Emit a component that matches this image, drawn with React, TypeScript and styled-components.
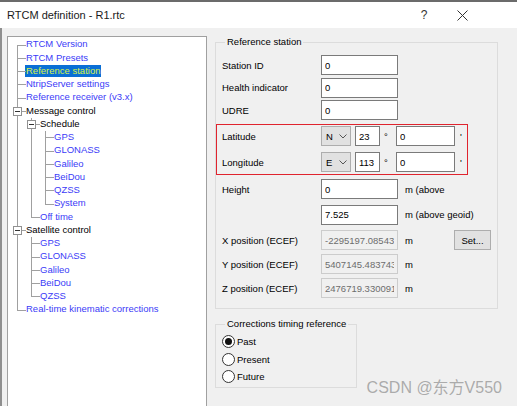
import React from 'react';
import styled, { createGlobalStyle } from 'styled-components';

const GlobalStyle = createGlobalStyle`
  html, body {
    margin: 0;
    padding: 0;
    background: #f0f0f0;
  }
  body {
    font-family: "Liberation Sans", Arial, sans-serif;
  }
`;

const Window = styled.div`
  position: relative;
  width: 517px;
  height: 406px;
  overflow: hidden;
  display: flex;
  flex-direction: column;
  box-sizing: border-box;
  background: #f0f0f0;
  border-top: 2px solid #6b6b6b;
`;

const TitleBar = styled.div`
  height: 26px;
  flex-shrink: 0;
  display: flex;
  align-items: center;
  padding-right: 36px;
  background: #ffffff;
`;

const Title = styled.div`
  flex: 1;
  padding-left: 7px;
  font-size: 11px;
  color: #1a1a1a;
`;

const CaptionButton = styled.div`
  width: 38px;
  height: 100%;
  display: flex;
  align-items: center;
  justify-content: center;
  font-size: 12px;
  color: #333;
`;

const Body = styled.div`
  flex: 1;
  display: flex;
  padding: 8px 0 0 5px;
  border-left: 2px solid #8f8f8f;
  min-height: 0;
`;

const TreePanel = styled.div`
  width: 200px;
  flex-shrink: 0;
  box-sizing: border-box;
  background: #ffffff;
  border: 1px solid #a0a0a0;
  border-bottom: none;
  padding: 1px 0 0 4px;
`;

const TreeRow = styled.div`
  display: flex;
  height: 13.25px;
`;

const Guide = styled.span<{ $on: boolean }>`
  position: relative;
  width: 14px;
  flex-shrink: 0;
  &::before {
    content: '';
    display: ${p => (p.$on ? 'block' : 'none')};
    position: absolute;
    left: 5px;
    top: 0;
    bottom: 0;
    width: 1px;
    background: #a0a0a0;
  }
`;

const Connector = styled.span<{ $first: boolean; $last: boolean }>`
  position: relative;
  width: 14px;
  flex-shrink: 0;
  &::before {
    content: '';
    position: absolute;
    left: 5px;
    top: ${p => (p.$first ? '50%' : '0')};
    bottom: ${p => (p.$last ? '50%' : '0')};
    width: 1px;
    background: #a0a0a0;
  }
  &::after {
    content: '';
    position: absolute;
    left: 5px;
    right: 0;
    top: 50%;
    height: 1px;
    background: #a0a0a0;
  }
`;

const Expander = styled.span`
  position: absolute;
  z-index: 1;
  left: 1px;
  top: calc(50% - 4px);
  width: 9px;
  height: 9px;
  box-sizing: border-box;
  display: flex;
  align-items: center;
  justify-content: center;
  background: #ffffff;
  border: 1px solid #919191;
  &::after {
    content: '';
    width: 5px;
    height: 1px;
    background: #333;
  }
`;

const TreeLabel = styled.span<{ $parent: boolean; $selected: boolean }>`
  align-self: center;
  margin-left: -1px;
  padding: 0 1px;
  font-size: 9.5px;
  line-height: 12.5px;
  white-space: nowrap;
  color: ${p => (p.$selected ? '#d4f24a' : p.$parent ? '#000000' : '#3b3bf7')};
  background: ${p => (p.$selected ? '#0a6fd6' : 'transparent')};
`;

const RightColumn = styled.div`
  width: 283px;
  margin-left: 8px;
  display: flex;
  flex-direction: column;
`;

const Group = styled.fieldset<{ $w?: number; $mt?: number }>`
  margin: ${p => p.$mt ?? 0}px 0 0 0;
  width: ${p => (p.$w ? `${p.$w}px` : 'auto')};
  min-width: 0;
  box-sizing: border-box;
  border: 1px solid #dcdcdc;
  padding: 7px 6px 10px 6px;
`;

const Legend = styled.legend`
  margin-left: 3px;
  padding: 0 2px;
  font-size: 9.5px;
  line-height: 12px;
  color: #000;
`;

const FieldRow = styled.div<{ $mt?: number }>`
  display: flex;
  align-items: center;
  height: 20px;
  margin-top: ${p => p.$mt ?? 0}px;
`;

const Label = styled.span`
  width: 99px;
  flex-shrink: 0;
  font-size: 9.5px;
  color: #000;
`;

const TextBox = styled.input<{ $w: number; $ml?: number }>`
  width: ${p => p.$w}px;
  height: 20px;
  margin: 0 0 0 ${p => p.$ml ?? 0}px;
  box-sizing: border-box;
  padding: 0 3px;
  border: 1px solid #7a7a7a;
  background: #ffffff;
  font-family: "Liberation Sans", Arial, sans-serif;
  font-size: 9.5px;
  color: #000;
  outline: none;
  &:disabled {
    background: #f0f0f0;
    border-color: #cccccc;
    color: #6d6d6d;
  }
`;

const Combo = styled.div`
  width: 30px;
  height: 20px;
  box-sizing: border-box;
  display: flex;
  align-items: center;
  justify-content: space-between;
  padding: 0 3px 0 4px;
  background: #e1e1e1;
  border: 1px solid #adadad;
  font-size: 9.5px;
  color: #000;
`;

const Mark = styled.span<{ $w: number; $ml: number }>`
  width: ${p => p.$w}px;
  margin-left: ${p => p.$ml}px;
  flex-shrink: 0;
  font-size: 9.5px;
  color: #000;
`;

const Unit = styled.span`
  margin-left: 7px;
  font-size: 9.5px;
  white-space: nowrap;
  color: #000;
`;

const Highlight = styled.div`
  margin: 4px 0 0 -6px;
  width: 252px;
  box-sizing: border-box;
  border: 1px solid #e0242e;
  padding: 1px 0 2px 5px;
`;

const PushButton = styled.button`
  margin-left: auto;
  width: 37px;
  height: 20px;
  box-sizing: border-box;
  padding: 0;
  background: #e1e1e1;
  border: 1px solid #adadad;
  font-family: "Liberation Sans", Arial, sans-serif;
  font-size: 9.5px;
  color: #000;
`;

const RadioRow = styled.label`
  display: flex;
  align-items: center;
  height: 17.5px;
  font-size: 9.5px;
  color: #000;
`;

const RadioCircle = styled.span<{ $checked: boolean }>`
  width: 13px;
  height: 13px;
  box-sizing: border-box;
  margin-right: 2px;
  border-radius: 50%;
  border: 1px solid #333;
  background: #fff;
  display: flex;
  align-items: center;
  justify-content: center;
  &::after {
    content: '';
    display: ${p => (p.$checked ? 'block' : 'none')};
    width: 7px;
    height: 7px;
    border-radius: 50%;
    background: #111;
  }
`;

const Watermark = styled.div`
  position: absolute;
  right: 15px;
  bottom: 9px;
  font-family: "Liberation Sans", "Noto Sans CJK SC", sans-serif;
  font-size: 16px;
  line-height: 18px;
  color: rgba(140, 140, 140, 0.7);
  pointer-events: none;
`;

type TreeNode = { label: string; selected?: boolean; children?: TreeNode[] };
type FlatRow = { node: TreeNode; depth: number; guides: boolean[]; first: boolean; last: boolean };

const leaf = (label: string): TreeNode => ({ label });

const tree: TreeNode[] = [
  leaf('RTCM Version'),
  leaf('RTCM Presets'),
  { label: 'Reference station', selected: true },
  leaf('NtripServer settings'),
  leaf('Reference receiver (v3.x)'),
  {
    label: 'Message control',
    children: [
      { label: 'Schedule', children: ['GPS', 'GLONASS', 'Galileo', 'BeiDou', 'QZSS', 'System'].map(l => leaf(l)) },
      leaf('Off time'),
    ],
  },
  { label: 'Satellite control', children: ['GPS', 'GLONASS', 'Galileo', 'BeiDou', 'QZSS'].map(l => leaf(l)) },
  leaf('Real-time kinematic corrections'),
];

function flatten(nodes: TreeNode[], depth: number, guides: boolean[], out: FlatRow[]) {
  nodes.forEach((node, i) => {
    const last = i === nodes.length - 1;
    out.push({ node, depth, guides, first: depth === 0 && i === 0, last });
    if (node.children) flatten(node.children, depth + 1, [...guides, !last], out);
  });
  return out;
}

const rows = flatten(tree, 0, [], []);

const Chevron = () => (
  <svg width="8" height="5" viewBox="0 0 8 5">
    <polyline points="0.5,0.5 4,4 7.5,0.5" fill="none" stroke="#555" strokeWidth="1" />
  </svg>
);

const CloseIcon = () => (
  <svg width="11" height="11" viewBox="0 0 11 11">
    <path d="M0.5 0.5 L10.5 10.5 M10.5 0.5 L0.5 10.5" stroke="#333" strokeWidth="1" />
  </svg>
);

const Radio = ({ label, checked }: { label: string; checked?: boolean }) => (
  <RadioRow>
    <RadioCircle $checked={!!checked} />
    {label}
  </RadioRow>
);

const App = () => (
  <Window>
    <GlobalStyle />
    <TitleBar>
      <Title>RTCM definition - R1.rtc</Title>
      <CaptionButton>?</CaptionButton>
      <CaptionButton>
        <CloseIcon />
      </CaptionButton>
    </TitleBar>
    <Body>
      <TreePanel>
        {rows.map((r, i) => (
          <TreeRow key={i}>
            {r.guides.map((g, j) => (
              <Guide key={j} $on={g} />
            ))}
            <Connector $first={r.first} $last={r.last}>
              {r.node.children && <Expander />}
            </Connector>
            <TreeLabel $parent={!!r.node.children} $selected={!!r.node.selected}>
              {r.node.label}
            </TreeLabel>
          </TreeRow>
        ))}
      </TreePanel>
      <RightColumn>
        <Group>
          <Legend>Reference station</Legend>
          <FieldRow>
            <Label>Station ID</Label>
            <TextBox $w={77} defaultValue="0" />
          </FieldRow>
          <FieldRow $mt={2.5}>
            <Label>Health indicator</Label>
            <TextBox $w={77} defaultValue="0" />
          </FieldRow>
          <FieldRow $mt={2.5}>
            <Label>UDRE</Label>
            <TextBox $w={77} defaultValue="0" />
          </FieldRow>
          <Highlight>
            <FieldRow>
              <Label>Latitude</Label>
              <Combo>
                N
                <Chevron />
              </Combo>
              <TextBox $w={25} $ml={4} defaultValue="23" />
              <Mark $w={12} $ml={4}>°</Mark>
              <TextBox $w={59} defaultValue="0" />
              <Mark $w={6} $ml={5}>'</Mark>
            </FieldRow>
            <FieldRow $mt={6}>
              <Label>Longitude</Label>
              <Combo>
                E
                <Chevron />
              </Combo>
              <TextBox $w={25} $ml={4} defaultValue="113" />
              <Mark $w={12} $ml={4}>°</Mark>
              <TextBox $w={59} defaultValue="0" />
              <Mark $w={6} $ml={5}>'</Mark>
            </FieldRow>
          </Highlight>
          <FieldRow $mt={4}>
            <Label>Height</Label>
            <TextBox $w={77} defaultValue="0" />
            <Unit>m (above</Unit>
          </FieldRow>
          <FieldRow $mt={5.5}>
            <Label />
            <TextBox $w={77} defaultValue="7.525" />
            <Unit>m (above geoid)</Unit>
          </FieldRow>
          <FieldRow $mt={5.5}>
            <Label>X position (ECEF)</Label>
            <TextBox $w={77} disabled defaultValue="-2295197.0854303" />
            <Unit>m</Unit>
            <PushButton>Set...</PushButton>
          </FieldRow>
          <FieldRow $mt={4}>
            <Label>Y position (ECEF)</Label>
            <TextBox $w={77} disabled defaultValue="5407145.4837437" />
            <Unit>m</Unit>
          </FieldRow>
          <FieldRow $mt={4}>
            <Label>Z position (ECEF)</Label>
            <TextBox $w={77} disabled defaultValue="2476719.3300913" />
            <Unit>m</Unit>
          </FieldRow>
        </Group>
        <Group $w={142} $mt={9} style={{ padding: '3px 6px 1px 6px' }}>
          <Legend>Corrections timing reference</Legend>
          <Radio label="Past" checked />
          <Radio label="Present" />
          <Radio label="Future" />
        </Group>
      </RightColumn>
    </Body>
    <Watermark>CSDN @东方V550</Watermark>
  </Window>
);

export default App;
